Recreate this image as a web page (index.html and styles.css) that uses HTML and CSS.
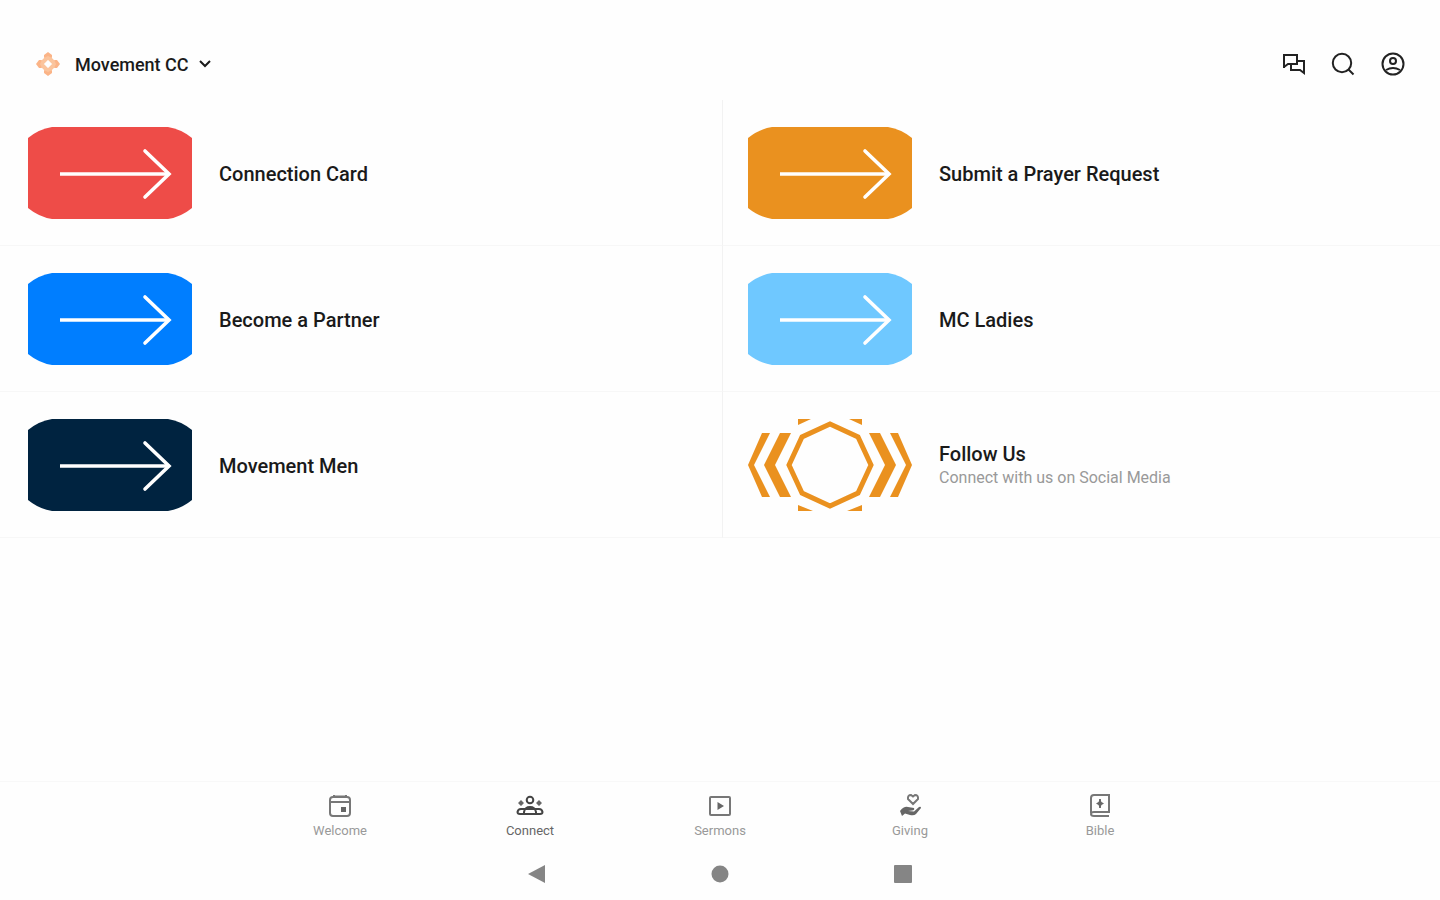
FILE: index.html
```html
<!DOCTYPE html>
<html lang="en">
<head>
<meta charset="utf-8">
<meta name="viewport" content="width=device-width, initial-scale=1">
<title>Movement CC</title>
<link rel="stylesheet" href="styles.css">
</head>
<body>
<svg class="defs" aria-hidden="true">
  <symbol id="tile" viewBox="0 0 164 92">
    <path fill="currentColor" d="M0 11Q11 2 24 0H140Q153 2 164 11V81Q153 90 140 92H24Q11 90 0 81Z"/>
    <path fill="none" stroke="#fff" stroke-width="3.6" stroke-linecap="round" stroke-linejoin="miter" d="M117 24 141 47 117 70"/>
    <path fill="none" stroke="#fff" stroke-width="3.6" d="M32 47H141"/>
  </symbol>
</svg>
<header class="topbar">
  <button class="switcher" type="button">
    <svg class="logo" viewBox="0 0 26 26" aria-hidden="true">
      <path fill="none" stroke="#fbc49c" stroke-width="4" stroke-linejoin="round" d="M13 6 20 13 13 20 6 13Z"/>
      <path fill="#fbb487" d="M9 4 13 1 17 4 17 7 13 5 9 7ZM22 9 25 13 22 17H19L21 13 19 9ZM9 22 13 25 17 22V19L13 21 9 19ZM4 9 1 13 4 17H7L5 13 7 9Z"/>
    </svg>
    <span>Movement CC</span>
    <svg class="chevron" viewBox="0 0 12 8" aria-hidden="true"><path d="M1 1 6 6 11 1"/></svg>
  </button>
  <div class="actions">
    <button type="button" aria-label="Messages"><svg viewBox="0 0 24 24" aria-hidden="true"><path d="M3 16V3H16V12H7L3 15M16 9H23V21L19 18H10V12"/></svg></button>
    <button type="button" aria-label="Search"><svg viewBox="0 0 24 24" aria-hidden="true"><circle cx="11" cy="11" r="9.200"/><path d="m17.500 17.500 5 5"/></svg></button>
    <button type="button" aria-label="Profile"><svg viewBox="0 0 24 24" aria-hidden="true"><circle cx="12" cy="12" r="10.500"/><circle cx="12" cy="9" r="3"/><path d="M5 18Q12 14 19 18"/></svg></button>
  </div>
</header>
<main>
  <ul class="cards">
    <li><a href="#connection"><svg class="tile red" aria-hidden="true"><use href="#tile"/></svg><span class="text"><span class="title">Connection Card</span></span></a></li>
    <li><a href="#prayer"><svg class="tile orange" aria-hidden="true"><use href="#tile"/></svg><span class="text"><span class="title">Submit a Prayer Request</span></span></a></li>
    <li><a href="#partner"><svg class="tile blue" aria-hidden="true"><use href="#tile"/></svg><span class="text"><span class="title">Become a Partner</span></span></a></li>
    <li><a href="#ladies"><svg class="tile sky" aria-hidden="true"><use href="#tile"/></svg><span class="text"><span class="title">MC Ladies</span></span></a></li>
    <li><a href="#men"><svg class="tile navy" aria-hidden="true"><use href="#tile"/></svg><span class="text"><span class="title">Movement Men</span></span></a></li>
    <li><a href="#follow">
      <svg class="tile orange" viewBox="0 0 164 92" aria-hidden="true">
        <path fill="none" stroke="currentColor" stroke-width="5" d="M82 5 110 18 123 46 110 74 82 87 54 74 41 46 54 18Z"/>
        <path fill="currentColor" d="M14 14H22L6 46 22 78H14L0 46ZM32 14H43L27 46 43 78H32L16 46ZM150 14H142L158 46 142 78H150L164 46ZM132 14H121L137 46 121 78H132L148 46ZM50 0H63L50 6ZM114 0H101L114 6ZM50 92H65L50 86ZM114 92H99L114 86Z"/>
      </svg>
      <span class="text"><span class="title">Follow Us</span><span class="subtitle">Connect with us on Social Media</span></span></a></li>
  </ul>
</main>
<footer>
  <nav class="tabs" aria-label="Main">
    <a href="#welcome"><svg viewBox="0 0 28 24" aria-hidden="true"><rect x="4" y="3" width="20" height="19" rx="3"/><path d="M4 8H24M8 1V4M20 1V4M7 2.500H21"/><rect class="solid" x="15" y="13" width="5" height="5"/></svg>Welcome</a>
    <a href="#connect" class="active" aria-current="page"><svg viewBox="0 0 28 24" aria-hidden="true"><circle cx="14" cy="6" r="3.300"/><path d="M4 20H24Q26.500 20 26.500 18 26 15 23 15H5Q2 15 1.500 18 1.500 20 4 20ZM8 20V18Q9 13 14 13T20 18V20"/><path class="solid" d="m5 6 3 3-3 3-3-3ZM23 6l3 3-3 3-3-3Z"/></svg>Connect</a>
    <a href="#sermons"><svg viewBox="0 0 28 24" aria-hidden="true"><rect x="4" y="3" width="20" height="18" rx="1"/><path class="solid" d="M11.500 8 18 12 11.500 16Z"/></svg>Sermons</a>
    <a href="#giving"><svg viewBox="0 0 28 24" aria-hidden="true"><path d="M17 10 12 5Q11.500 1 15 1L17 2.500 19 1Q22.500 1 22 5Z"/><path class="solid" d="M4 17Q8 12 12 13L18 14Q19 16 16 16.500L12 17 18 17.500 23 13Q25 12 25 14L20 20Q18 22 14 21L9 19.500 6 22Z"/></svg>Giving</a>
    <a href="#bible"><svg viewBox="0 0 28 24" aria-hidden="true"><path d="M5 19V4Q5 1 8 1H23V18H8Q5 18 5 20 5 22 8 22H23M14 5V14"/><path class="solid" d="M14 5 15.500 8 18 9.500 15.500 11 14 14 12.500 11 10 9.500 12.500 8Z"/></svg>Bible</a>
  </nav>
  <div class="system">
    <button type="button" aria-label="Back"><svg viewBox="0 0 20 20" aria-hidden="true"><path d="M18 1V19L1 10Z"/></svg></button>
    <button type="button" aria-label="Home"><svg viewBox="0 0 20 20" aria-hidden="true"><circle cx="10" cy="10" r="8.500"/></svg></button>
    <button type="button" aria-label="Recent apps"><svg viewBox="0 0 20 20" aria-hidden="true"><rect x="1" y="1" width="18" height="18" rx="1"/></svg></button>
  </div>
</footer>
</body>
</html>
```
FILE: styles.css
```css
* { box-sizing: border-box; }

body {
  margin: 0;
  min-height: 100vh;
  display: flex;
  flex-direction: column;
  background: #fefefe;
  color: #1a1a1a;
  font-family: Roboto, "Liberation Sans", sans-serif;
}

button {
  padding: 0;
  border: 0;
  background: none;
  color: inherit;
  font: inherit;
  cursor: pointer;
}

a { color: inherit; text-decoration: none; }
svg { display: block; }
.defs { position: absolute; width: 0; height: 0; }

.topbar {
  display: flex;
  align-items: center;
  justify-content: space-between;
  padding: 28px 35px 0;
  height: 100px;
}

.switcher {
  display: flex;
  align-items: center;
  font-size: 18px;
  font-weight: 500;
}

.logo { width: 26px; height: 26px; margin-right: 14px; }

.chevron {
  width: 12px;
  height: 8px;
  margin-left: 10px;
  fill: none;
  stroke: currentColor;
  stroke-width: 2;
}

.actions { display: flex; gap: 26px; }

.actions svg {
  width: 24px;
  height: 24px;
  fill: none;
  stroke: #222;
  stroke-width: 2;
}

main { flex: 1; }

.cards {
  display: grid;
  grid-template-columns: 722fr 718fr;
  margin: 0;
  padding: 0;
  list-style: none;
}

.cards li { border-bottom: 1px solid #f7f7f7; }
.cards li:nth-child(even) { border-left: 1px solid #f2f2f2; }

.cards a {
  display: flex;
  align-items: center;
  gap: 27px;
  min-height: 145px;
  padding: 0 28px;
}

.cards li:nth-child(even) a { padding-left: 25px; }

.tile { flex: none; width: 164px; height: 92px; }
.red { color: #ee4c48; }
.orange { color: #ea911f; }
.blue { color: #007eff; }
.sky { color: #6fc8ff; }
.navy { color: #002340; }

.text { display: flex; flex-direction: column; padding-top: 2px; }
.title { font-size: 20px; font-weight: 500; line-height: 24px; }
.subtitle { color: #999; font-size: 16px; line-height: 24px; }

.tabs {
  display: flex;
  justify-content: center;
  padding: 12px 0 8px;
  border-top: 1px solid #f8f8f8;
}

.tabs a {
  display: flex;
  flex: 0 1 190px;
  flex-direction: column;
  align-items: center;
  gap: 5px;
  color: #999;
  font-size: 13px;
  line-height: 16px;
}

.tabs .active { color: #666; }

.tabs svg {
  width: 28px;
  height: 24px;
  fill: none;
  stroke: #777;
  stroke-width: 2;
}

.tabs .active svg { stroke: #444; }
.tabs .solid { fill: #666; stroke: none; }

.system {
  display: flex;
  justify-content: center;
  gap: 163px;
  padding: 17px 0 16px;
}

.system svg { width: 20px; height: 20px; fill: #858585; }
```
